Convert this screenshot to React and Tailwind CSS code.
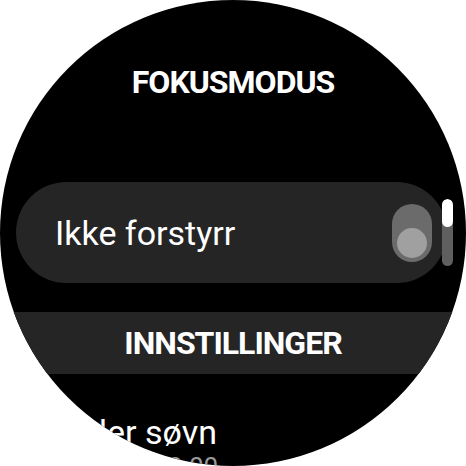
export default function App() {
  return (
    <div className="w-[466px] h-[466px] bg-white relative" style={{ fontFamily: "Roboto, 'Noto Sans', sans-serif" }}>
      <div className="w-full h-full rounded-full bg-black overflow-hidden flex flex-col relative">
        <div className="mt-[66px] text-center text-white font-bold text-[32px] leading-[32px] tracking-[-1px]">FOKUSMODUS</div>
        <div className="mt-[84px] ml-[16px] mr-[19px] h-[101px] rounded-full bg-[#252525] flex items-center justify-between pl-[39px] pr-[15px] shrink-0">
          <span className="text-white text-[34px] leading-[40px]">Ikke forstyrr</span>
          <div className="w-[40px] h-[58px] rounded-full bg-[#6b6b6b] flex flex-col justify-end items-center pb-[4px]">
            <div className="w-[30px] h-[30px] rounded-full bg-[#a0a0a0]" />
          </div>
        </div>
        <div className="mt-[29px] h-[62px] shrink-0 bg-[#252525] flex items-center justify-center text-white font-bold text-[32px] leading-[32px] tracking-[-1px]">INNSTILLINGER</div>
        <div className="mt-[38px] pl-[47px] text-white text-[34px] leading-[40px] shrink-0">Under søvn</div>
        <div className="pl-[47px] text-[#9a9a9a] text-[26px] leading-[30px] shrink-0 whitespace-nowrap">Planlagt, 22:00</div>
        <div className="absolute left-[442px] top-[199px] w-[11px] h-[67px] rounded-full bg-[#5f5f5f] overflow-hidden">
          <div className="w-full h-[28px] rounded-full bg-white" />
        </div>
      </div>
    </div>
  );
}
